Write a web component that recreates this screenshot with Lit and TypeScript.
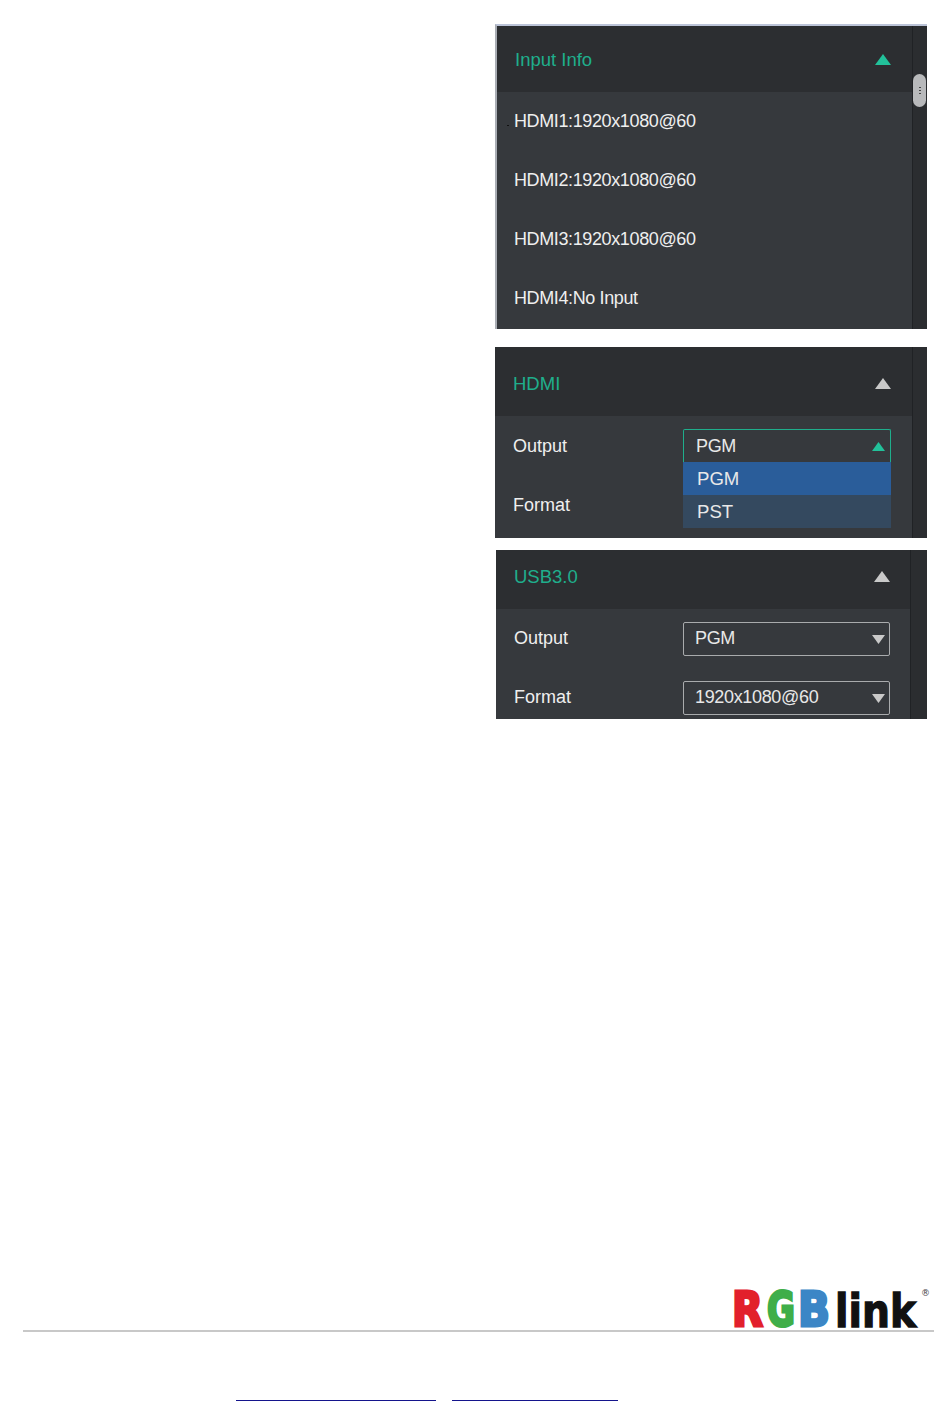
import { LitElement, html, css } from "lit";
import { customElement } from "lit/decorators.js";

const tri = (cls: string, down = false) => html`<svg class="tri ${cls}" viewBox="0 0 16 11"><path d="${down ? "M0 0H16L8 11Z" : "M8 0L16 11H0Z"}" /></svg>`;

@customElement("app-root")
export class AppRoot extends LitElement {
  static styles = css`
    :host { display: block; height: 1419px; background: #fff; font-family: "Liberation Sans", Arial, sans-serif; overflow: hidden; }
    .column { display: flex; flex-direction: column; margin-left: 495px; width: 432px; padding-top: 24px; }
    .panel { display: flex; overflow: hidden; background: #2b2d30; color: #efefef; font-size: 18px; }
    .first { height: 305px; box-sizing: border-box; border-top: 2px solid #bcc4d8; border-left: 2px solid #a9adb4; }
    .second { height: 191px; margin-top: 18px; }
    .third { height: 169px; margin-top: 12px; margin-left: 1px; }
    .main { flex: 1; min-width: 0; background: #36393d; }
    .rail { width: 15px; box-sizing: border-box; flex: none; position: relative; border-left: 1px solid #202225; background: #2b2d30; }
    .third .rail { width: 17px; }
    .thumb { position: absolute; left: 0; top: 48px; width: 13px; height: 33px; border-radius: 7px; background: #b8b9bb; display: flex; align-items: center; justify-content: center; }
    .grip { width: 2px; height: 7px; background: repeating-linear-gradient(#444 0 1px, transparent 1px 3px); }
    .head { display: flex; align-items: center; justify-content: space-between; box-sizing: border-box; background: #2c2e31; color: #1fae8c; font-size: 18.5px; padding: 0 21px 0 18px; }
    .first .head { height: 66px; padding-top: 1px; }
    .second .head { height: 69px; padding-top: 4px; padding-right: 21px; }
    .third .head { height: 59px; padding-bottom: 6px; padding-right: 20px; }
    .tri { width: 16px; height: 11px; display: block; }
    .tri path { fill: #c9c9c9; }
    .tri.green path { fill: #22c19a; }
    .tri.small { width: 13px; height: 9px; }
    .info { height: 59px; display: flex; align-items: center; padding-left: 17px; position: relative; font-size: 18px; letter-spacing: -0.38px; }
    .dot { position: absolute; left: 10px; top: 33px; width: 2px; height: 1px; background: #111; }
    .form { display: flex; flex-direction: column; gap: 25px; padding: 13px 0 0 18px; }
    .row { display: grid; grid-template-columns: 170px 208px; align-items: center; height: 34px; }
    .third .row { grid-template-columns: 169px 207px; }
    .third .row > span { padding-bottom: 2px; }
    .select { position: relative; box-sizing: border-box; height: 34px; border: 1px solid #a9abad; border-radius: 2px; display: flex; align-items: center; justify-content: space-between; padding: 0 4px 0 11px; font-size: 18px; letter-spacing: -0.34px; color: #e8e8e8; }
    .select > span { padding-bottom: 2px; }
    .select.open { border-color: #1fae8c; border-bottom: none; border-radius: 2px 2px 0 0; padding: 0 5px 0 12px; }
    .select.open > span { padding-bottom: 0; }
    .menu { position: absolute; left: -1px; right: -1px; top: 32px; display: flex; flex-direction: column; font-size: 18.6px; letter-spacing: 0; }
    .menu div { height: 33px; display: flex; align-items: center; padding-left: 14px; background: #34495f; }
    .menu .on { background: #2a5d9a; }
    .footer { margin: 558px 16px 0 23px; display: flex; flex-direction: column; }
    .logo { align-self: flex-end; display: block; margin-bottom: -6px; }
    .rgb { font-family: "DejaVu Sans", sans-serif; font-weight: 700; font-size: 48px; stroke-width: 3px; stroke-linejoin: miter; }
    .word { font-family: "DejaVu Sans", sans-serif; font-weight: 700; font-size: 47px; fill: #111; stroke: #111; stroke-width: 1.4px; }
    .mark { font-family: "DejaVu Sans", sans-serif; font-size: 9px; fill: #444; }
    .r { fill: #e2202c; stroke: #e2202c; }
    .g { fill: #3fae49; stroke: #3fae49; }
    .b { fill: #3b86c6; stroke: #3b86c6; }
    .rule { height: 2px; background: #c8c8c8; margin-top: 1px; }
    .links { display: flex; gap: 16px; margin: 67px 0 0 213px; }
    .link { display: block; height: 1px; border-bottom: 1px solid #14148c; }
    .l1 { width: 200px; }
    .l2 { width: 166px; }
  `;

  select(value: string) {
    return html`<div class="select"><span>${value}</span>${tri("small", true)}</div>`;
  }

  render() {
    return html`
      <div class="column">
        <section class="panel first">
          <div class="main">
            <div class="head"><span>Input Info</span>${tri("green")}</div>
            <div class="info"><i class="dot"></i>HDMI1:1920x1080@60</div>
            <div class="info">HDMI2:1920x1080@60</div>
            <div class="info">HDMI3:1920x1080@60</div>
            <div class="info">HDMI4:No Input</div>
          </div>
          <div class="rail"><div class="thumb"><i class="grip"></i></div></div>
        </section>
        <section class="panel second">
          <div class="main">
            <div class="head"><span>HDMI</span>${tri("")}</div>
            <div class="form">
              <div class="row"><span>Output</span>
                <div class="select open"><span>PGM</span>${tri("small green")}
                  <div class="menu"><div class="on">PGM</div><div>PST</div></div>
                </div>
              </div>
              <div class="row"><span>Format</span></div>
            </div>
          </div>
          <div class="rail"></div>
        </section>
        <section class="panel third">
          <div class="main">
            <div class="head"><span>USB3.0</span>${tri("")}</div>
            <div class="form">
              <div class="row"><span>Output</span>${this.select("PGM")}</div>
              <div class="row"><span>Format</span>${this.select("1920x1080@60")}</div>
            </div>
          </div>
          <div class="rail"></div>
        </section>
      </div>
      <footer class="footer">
        <svg class="logo" width="204" height="58" viewBox="0 0 204 58" role="img" aria-label="RGBlink">
          <text class="rgb r" x="2" y="49" textLength="31" lengthAdjust="spacingAndGlyphs">R</text>
          <text class="rgb g" x="37" y="49" textLength="28" lengthAdjust="spacingAndGlyphs">G</text>
          <text class="rgb b" x="68" y="49" textLength="32" lengthAdjust="spacingAndGlyphs">B</text>
          <text class="word" x="105" y="50" textLength="81" lengthAdjust="spacingAndGlyphs">link</text>
          <text class="mark" x="191" y="19">®</text>
        </svg>
        <div class="rule"></div>
        <div class="links"><a class="link l1"></a><a class="link l2"></a></div>
      </footer>
    `;
  }
}
